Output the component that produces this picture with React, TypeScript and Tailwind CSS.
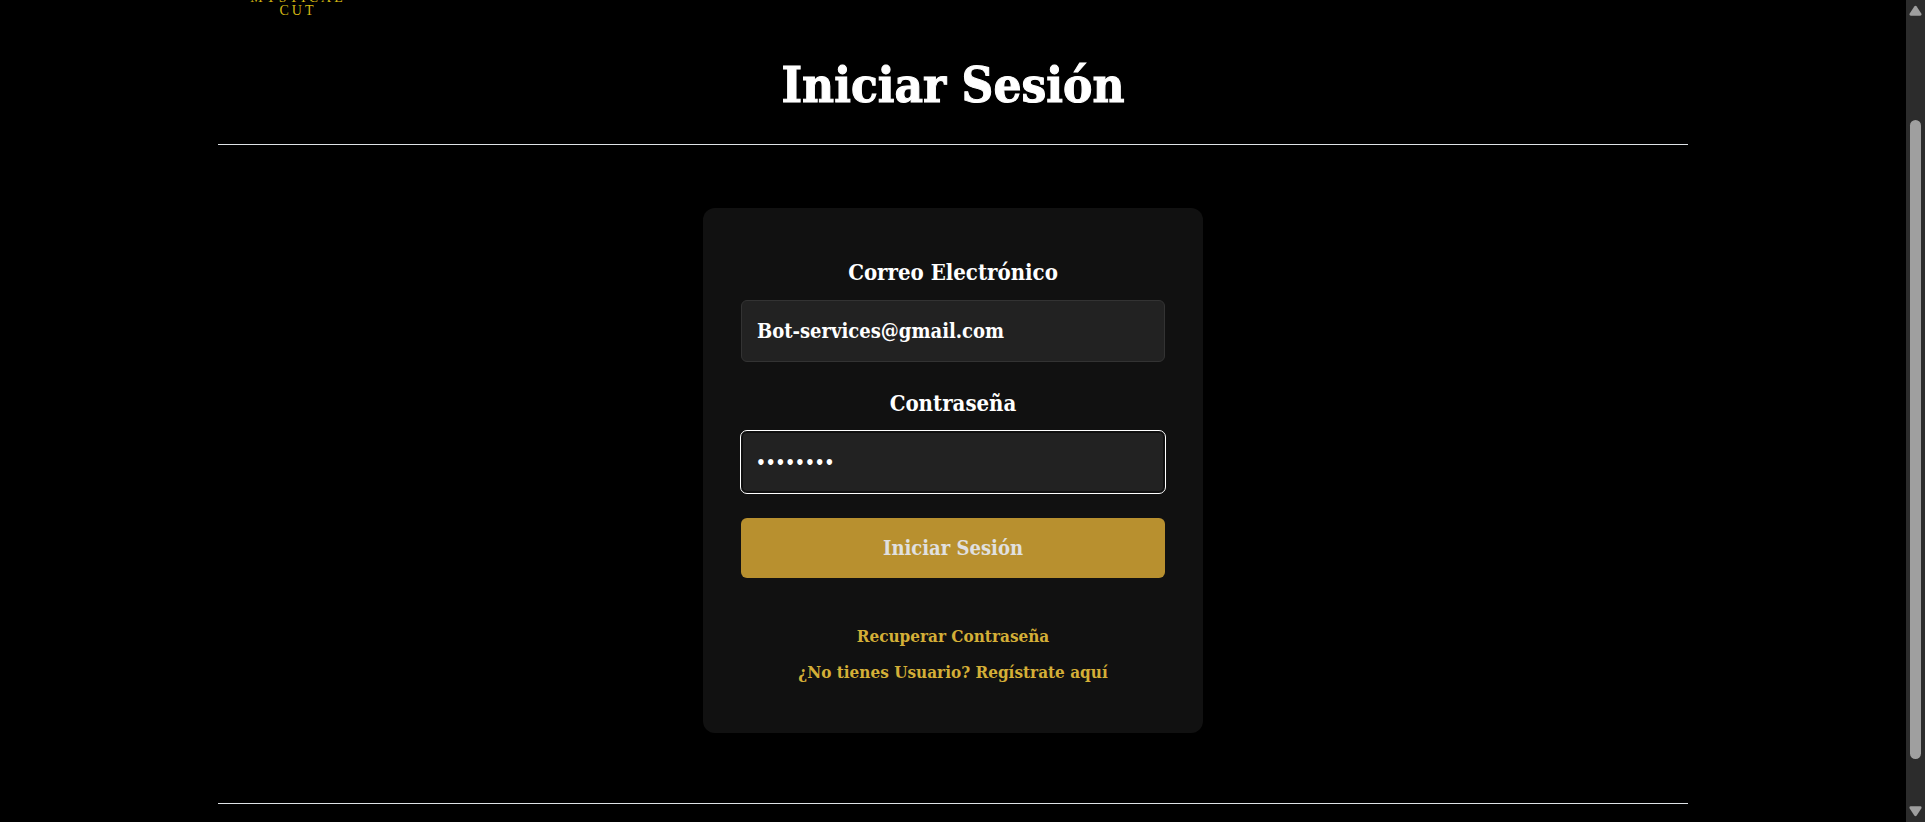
import React from "react";

const serif = "font-['DejaVu_Serif_Condensed','DejaVu_Serif',serif] font-bold";

function Logo() {
  return (
    <header className="flex h-[17px] flex-col justify-end overflow-hidden pl-[30px]">
      <a
        href="#inicio"
        className="w-[100px] shrink-0 text-center font-['Liberation_Serif',serif] text-[14px] leading-[13px] font-normal tracking-[3px] text-[#d4b814]"
      >
        <span className="block">MYSTICAL</span>
        <span className="block">CUT</span>
      </a>
    </header>
  );
}

function Scrollbar() {
  return (
    <div aria-hidden="true" className="flex w-[19px] shrink-0 flex-col items-center bg-[#2c2c2c] py-[5px]">
      <svg width="13" height="11" viewBox="0 0 13 11" fill="#9f9f9f">
        <path d="M5.3 1.6Q6.5 0 7.7 1.6L12.3 8.6Q13.2 10.5 11.2 10.7H1.8Q-.2 10.5.7 8.6Z" />
      </svg>
      <div className="flex w-[11px] flex-1 flex-col pt-[104px] pb-[47px]">
        <div className="flex-1 rounded-full bg-[#9f9f9f]" />
      </div>
      <svg width="13" height="11" viewBox="0 0 13 11" fill="#9f9f9f">
        <path d="M5.3 9.4Q6.5 11 7.7 9.4L12.3 2.4Q13.2.5 11.2.3H1.8Q-.2.5.7 2.4Z" />
      </svg>
    </div>
  );
}

export default function App() {
  return (
    <div className={`${serif} flex min-h-screen bg-black text-white`}>
      <div className="flex min-w-0 flex-1 justify-center px-4">
        <div className="w-full max-w-[1470px]">
          <Logo />
          <h1 className="pt-[38px] pb-[29px] text-center text-[49px] leading-[60px] [-webkit-text-stroke:1px_white]">
            Iniciar Sesión
          </h1>
          <hr className="border-[#dee2e6]" />

          <main className="flex justify-center pt-[63px] pb-[70px]">
            <form
              className="flex w-full max-w-[500px] flex-col rounded-xl bg-[#111] px-[38px] pt-12 pb-[43px] text-center"
              onSubmit={(e) => e.preventDefault()}
            >
              <label htmlFor="correo" className="mb-3 text-[22px] leading-[32px]">
                Correo Electrónico
              </label>
              <input
                id="correo"
                type="email"
                defaultValue="Bot-services@gmail.com"
                className="h-[62px] w-full rounded-md border border-[#333] bg-[#222] px-[15px] text-[20px] outline-none"
              />

              <label htmlFor="clave" className="mt-[25px] mb-3 text-[22px] leading-[32px]">
                Contraseña
              </label>
              <input
                id="clave"
                type="password"
                defaultValue="12345678"
                className="h-[62px] w-full rounded-md border-2 border-[#101010] bg-[#222] px-[13px] text-[17px] outline-1 outline-white"
              />

              <button
                type="submit"
                className="mt-[25px] h-[60px] w-full rounded-md bg-[#b8902f] text-[20px] text-[#e0e0e0]"
              >
                Iniciar Sesión
              </button>

              <nav className="mt-10 flex flex-col items-center text-[17px] leading-[36px] text-[#d4af37]">
                <a href="#recuperar">Recuperar Contraseña</a>
                <a href="#registro">¿No tienes Usuario? Regístrate aquí</a>
              </nav>
            </form>
          </main>

          <hr className="border-[#dee2e6]" />
        </div>
      </div>
      <Scrollbar />
    </div>
  );
}
